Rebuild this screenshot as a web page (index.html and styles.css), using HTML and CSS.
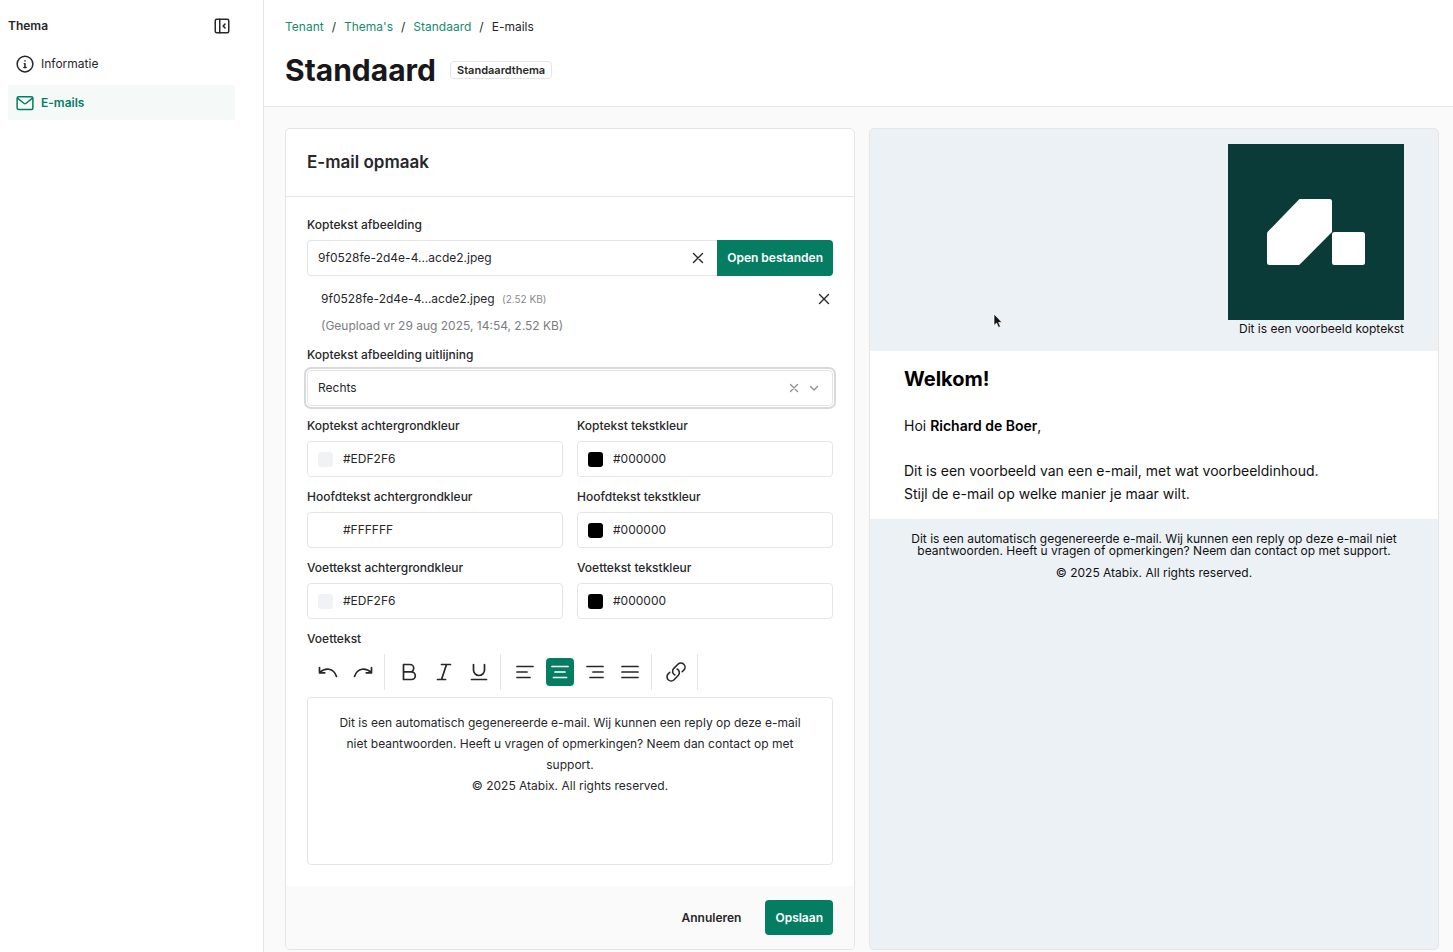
FILE: index.html
```html
<!DOCTYPE html>
<html lang="nl">
<head>
<meta charset="utf-8">
<meta name="viewport" content="width=device-width, initial-scale=1">
<title>Standaard – E-mails</title>
<link rel="stylesheet" href="styles.css">
</head>
<body>
<div class="app">
  <aside class="sidebar">
    <div class="sidebar-head">
      <h2 class="sidebar-title">Thema</h2>
      <button class="icon-button" type="button" aria-label="Zijbalk inklappen">
        <svg class="icon" width="18" height="18" viewBox="0 0 24 24"><rect x="3" y="3" width="18" height="18" rx="2"/><path d="M9 3v18M16 9.500l-2.500 2.500 2.500 2.500"/></svg>
      </button>
    </div>
    <nav class="nav">
      <a class="nav-link" href="#informatie">
        <svg class="icon" width="18" height="18" viewBox="0 0 24 24"><circle cx="12" cy="12" r="10.500"/><path d="M12 16.500v-5h-1M10.500 16.500h3M12 7.500v.5"/></svg>
        Informatie
      </a>
      <a class="nav-link nav-link-active" href="#e-mails" aria-current="page">
        <svg class="icon" width="18" height="18" viewBox="0 0 24 24"><rect x="1.500" y="3.500" width="21" height="17" rx="2"/><path d="M2 5.500l8.500 6.800a2.500 2.500 0 0 0 3 0L22 5.500"/></svg>
        E-mails
      </a>
    </nav>
  </aside>

  <main class="main">
    <header class="page-head">
      <nav class="breadcrumb" aria-label="Kruimelpad">
        <a href="#tenant">Tenant</a><span>/</span><a href="#themas">Thema's</a><span>/</span><a href="#standaard">Standaard</a><span>/</span><span>E-mails</span>
      </nav>
      <div class="title-row">
        <h1 class="page-title">Standaard</h1>
        <span class="badge">Standaardthema</span>
      </div>
    </header>

    <div class="content">
      <form class="card">
        <div class="card-head"><h2 class="card-title">E-mail opmaak</h2></div>
        <div class="card-body">
          <div class="field">
            <label class="label" for="header-image">Koptekst afbeelding</label>
            <div class="file-picker">
              <div class="control file-control">
                <input class="text-input" id="header-image" type="text" value="9f0528fe-2d4e-4...acde2.jpeg" readonly>
                <button class="icon-button" type="button" aria-label="Bestand wissen">
                  <svg class="icon" width="16" height="16" viewBox="0 0 16 16"><path d="M3.500 3.500l9 9M12.500 3.500l-9 9"/></svg>
                </button>
              </div>
              <button class="button button-primary file-open" type="button">Open bestanden</button>
            </div>
            <div class="file-list">
              <div class="file-row">
                <span>9f0528fe-2d4e-4...acde2.jpeg <small class="file-size">(2.52 KB)</small></span>
                <button class="icon-button" type="button" aria-label="Bestand verwijderen">
                  <svg class="icon" width="16" height="16" viewBox="0 0 16 16"><path d="M3.500 3.500l9 9M12.500 3.500l-9 9"/></svg>
                </button>
              </div>
              <p class="file-meta">(Geupload vr 29 aug 2025, 14:54, 2.52 KB)</p>
            </div>
          </div>

          <div class="field">
            <label class="label" for="header-align">Koptekst afbeelding uitlijning</label>
            <div class="control control-focus select-control">
              <select class="select" id="header-align">
                <option>Links</option><option>Midden</option><option selected>Rechts</option>
              </select>
              <button class="icon-button muted" type="button" aria-label="Keuze wissen">
                <svg class="icon" width="12" height="12" viewBox="0 0 12 12"><path d="M2.500 2.500l7 7M9.500 2.500l-7 7"/></svg>
              </button>
              <svg class="icon muted chevron" width="12" height="12" viewBox="0 0 12 12"><path d="M2.500 4.500L6 8l3.500-3.500"/></svg>
            </div>
          </div>

          <div class="color-grid">
            <div class="field">
              <label class="label" for="header-bg">Koptekst achtergrondkleur</label>
              <div class="control"><input class="swatch" type="color" value="#f1f2f4" aria-label="Kies koptekst achtergrondkleur"><input class="text-input" id="header-bg" type="text" value="#EDF2F6"></div>
            </div>
            <div class="field">
              <label class="label" for="header-fg">Koptekst tekstkleur</label>
              <div class="control"><input class="swatch" type="color" value="#000000" aria-label="Kies koptekst tekstkleur"><input class="text-input" id="header-fg" type="text" value="#000000"></div>
            </div>
            <div class="field">
              <label class="label" for="body-bg">Hoofdtekst achtergrondkleur</label>
              <div class="control"><input class="swatch" type="color" value="#ffffff" aria-label="Kies hoofdtekst achtergrondkleur"><input class="text-input" id="body-bg" type="text" value="#FFFFFF"></div>
            </div>
            <div class="field">
              <label class="label" for="body-fg">Hoofdtekst tekstkleur</label>
              <div class="control"><input class="swatch" type="color" value="#000000" aria-label="Kies hoofdtekst tekstkleur"><input class="text-input" id="body-fg" type="text" value="#000000"></div>
            </div>
            <div class="field">
              <label class="label" for="footer-bg">Voettekst achtergrondkleur</label>
              <div class="control"><input class="swatch" type="color" value="#f0f2f6" aria-label="Kies voettekst achtergrondkleur"><input class="text-input" id="footer-bg" type="text" value="#EDF2F6"></div>
            </div>
            <div class="field">
              <label class="label" for="footer-fg">Voettekst tekstkleur</label>
              <div class="control"><input class="swatch" type="color" value="#000000" aria-label="Kies voettekst tekstkleur"><input class="text-input" id="footer-fg" type="text" value="#000000"></div>
            </div>
          </div>

          <div class="field">
            <label class="label" for="footer-text">Voettekst</label>
            <div class="toolbar" role="toolbar" aria-label="Opmaak">
              <div class="tool-group">
                <button class="tool" type="button" aria-label="Ongedaan maken"><svg class="icon" width="20" height="20" viewBox="0 0 20 20"><path d="M1.500 5.500v5.300h5.300M1.800 10.500C7 5.500 15.500 5.500 18.500 14.500"/></svg></button>
                <button class="tool" type="button" aria-label="Opnieuw"><svg class="icon" width="20" height="20" viewBox="0 0 20 20"><path d="M18.500 5.500v5.300h-5.300M18.200 10.500C13 5.500 4.500 5.500 1.500 14.500"/></svg></button>
              </div>
              <div class="tool-group">
                <button class="tool" type="button" aria-label="Vet"><svg class="icon" width="20" height="20" viewBox="0 0 20 20"><path d="M4.500 2.500H11a3.700 3.700 0 0 1 0 7.400H4.500zM4.500 9.900h8a3.800 3.800 0 0 1 0 7.600h-8z"/></svg></button>
                <button class="tool" type="button" aria-label="Cursief"><svg class="icon" width="20" height="20" viewBox="0 0 20 20"><path d="M7.500 2.500h9M3.500 17.500h8M12.500 2.500l-5 15"/></svg></button>
                <button class="tool" type="button" aria-label="Onderstrepen"><svg class="icon" width="20" height="20" viewBox="0 0 20 20"><path d="M4.500 2.500v5.500a5.500 5.500 0 0 0 11 0V2.500M2.500 17.500h15"/></svg></button>
              </div>
              <div class="tool-group">
                <button class="tool" type="button" aria-label="Links uitlijnen"><svg class="icon" width="20" height="20" viewBox="0 0 20 20"><path d="M2 4.500h16M2 10h10M2 15.500h13"/></svg></button>
                <button class="tool tool-active" type="button" aria-label="Centreren" aria-pressed="true"><svg class="icon" width="20" height="20" viewBox="0 0 20 20"><path d="M2 4.500h16M5 10h10M3.500 15.500h13"/></svg></button>
                <button class="tool" type="button" aria-label="Rechts uitlijnen"><svg class="icon" width="20" height="20" viewBox="0 0 20 20"><path d="M2 4.500h16M8 10h10M5 15.500h13"/></svg></button>
                <button class="tool" type="button" aria-label="Uitvullen"><svg class="icon" width="20" height="20" viewBox="0 0 20 20"><path d="M2 4.500h16M2 10h16M2 15.500h16"/></svg></button>
              </div>
              <div class="tool-group">
                <button class="tool" type="button" aria-label="Link invoegen"><svg class="icon" width="22" height="22" viewBox="0 0 24 24"><path d="M13.200 8.700a4.500 4.500 0 0 1 1.200 7.200l-4.500 4.500a4.500 4.500 0 0 1-6.400-6.400l1.800-1.700m13.400-.6l1.800-1.700a4.500 4.500 0 0 0-6.400-6.400L9.600 8.100a4.500 4.500 0 0 0 1.200 7.200"/></svg></button>
              </div>
            </div>
            <textarea class="editor" id="footer-text">Dit is een automatisch gegenereerde e-mail. Wij kunnen een reply op deze e-mail niet beantwoorden. Heeft u vragen of opmerkingen? Neem dan contact op met support.
© 2025 Atabix. All rights reserved.</textarea>
          </div>
        </div>
        <div class="card-foot">
          <button class="button button-ghost" type="button">Annuleren</button>
          <button class="button button-primary" type="submit">Opslaan</button>
        </div>
      </form>

      <section class="preview" aria-label="Voorbeeld">
        <div class="mail-head">
          <svg class="logo" width="176" height="176" viewBox="0 0 176 176" role="img" aria-label="Atabix">
            <rect width="176" height="176" fill="#0a3b38"/>
            <path fill="#fff" d="M72 55h29.500a2.500 2.500 0 0 1 2.500 2.500V88L72 120.300a2 2 0 0 1-1.500.7H41.500a2.500 2.500 0 0 1-2.500-2.500V89.500a3 3 0 0 1 1-2L70.500 56a2.500 2.500 0 0 1 1.500-1z"/>
            <rect x="104" y="88" width="33" height="33" rx="2.500" fill="#fff"/>
          </svg>
          <p class="mail-caption">Dit is een voorbeeld koptekst</p>
          <svg class="pointer" width="12" height="16" viewBox="0 0 12 16" aria-hidden="true"><path d="M1 1v11.500l2.600-2.400 1.900 4.300 2-.9-1.900-4.100H9z" fill="#111" stroke="#fff" stroke-width=".7"/></svg>
        </div>
        <div class="mail-body">
          <h2 class="mail-title">Welkom!</h2>
          <p>Hoi <strong>Richard de Boer</strong>,</p>
          <p>Dit is een voorbeeld van een e-mail, met wat voorbeeldinhoud.<br>Stijl de e-mail op welke manier je maar wilt.</p>
        </div>
        <div class="mail-foot">
          <p>Dit is een automatisch gegenereerde e-mail. Wij kunnen een reply op deze e-mail niet beantwoorden. Heeft u vragen of opmerkingen? Neem dan contact op met support.</p>
          <p>© 2025 Atabix. All rights reserved.</p>
        </div>
      </section>
    </div>
  </main>
</div>
</body>
</html>
```
FILE: styles.css
```css
:root {
  --green: #047d62;
  --border: #e5e5e6;
  --text: #27272a;
}

* { box-sizing: border-box; }

body {
  margin: 0;
  font-family: Inter, "Liberation Sans", sans-serif;
  font-size: 12px;
  line-height: 18px;
  color: var(--text);
  background: #fff;
}

h1, h2, p { margin: 0; }
a { color: inherit; text-decoration: none; }
button, input, select, textarea { font: inherit; color: inherit; }
button { cursor: pointer; }

.icon {
  display: block;
  flex: none;
  fill: none;
  stroke: currentColor;
  stroke-width: 1.4;
  stroke-linecap: round;
  stroke-linejoin: round;
}

.icon-button {
  display: flex;
  padding: 0;
  border: 0;
  background: none;
}

.muted { color: #929294; }

.app { display: flex; min-height: 100vh; }

/* Sidebar */
.sidebar {
  flex: none;
  width: 264px;
  padding: 17px 28px 0 8px;
  border-right: 1px solid var(--border);
}
.sidebar-head {
  display: flex;
  align-items: center;
  justify-content: space-between;
  padding-right: 4px;
}
.sidebar-head .icon, .nav-link .icon { stroke-width: 2; }
.sidebar-title { font-size: 12px; font-weight: 600; }
.nav { display: flex; flex-direction: column; gap: 4px; margin-top: 11px; }
.nav-link {
  display: flex;
  align-items: center;
  gap: 7px;
  height: 35px;
  padding: 0 8px;
}
.nav-link-active { color: var(--green); background: #f5faf8; font-weight: 600; }

/* Page header */
.main { flex: 1; min-width: 0; background: #fafafa; }
.page-head {
  padding: 18px 21px;
  border-bottom: 1px solid var(--border);
  background: #fff;
}
.breadcrumb { display: flex; gap: 8px; }
.breadcrumb a { color: #168c6d; }
.title-row { display: flex; align-items: center; gap: 14px; margin-top: 16px; }
.page-title { font-size: 30px; line-height: 36px; font-weight: 700; color: #18181b; }
.badge {
  padding: 0 6px;
  border: 1px solid var(--border);
  border-radius: 4px;
  font-size: 11px;
  line-height: 16px;
  font-weight: 600;
}

/* Form card */
.content {
  display: grid;
  grid-template-columns: 1fr 1fr;
  gap: 14px;
  padding: 21px 14px 0 21px;
}
.card, .preview {
  border: 1px solid var(--border);
  border-radius: 5px;
  overflow: hidden;
}
.card { background: #fff; }
.card-head { padding: 21px; border-bottom: 1px solid var(--border); }
.card-title { font-size: 17px; line-height: 25px; font-weight: 600; }
.card-body {
  display: flex;
  flex-direction: column;
  gap: 11px;
  padding: 19px 21px 21px;
}
.label { display: block; margin-bottom: 6px; font-weight: 500; }
.control {
  display: flex;
  align-items: center;
  height: 36px;
  padding: 0 10px;
  border: 1px solid var(--border);
  border-radius: 4px;
  background: #fff;
}
.control-focus { outline: 2px solid #d9d9db; outline-offset: 1px; }
.text-input {
  flex: 1;
  min-width: 0;
  padding: 0;
  border: 0;
  outline: 0;
  background: none;
}
.file-picker { display: flex; }
.file-control { flex: 1; padding-right: 11px; border-right: 0; border-radius: 4px 0 0 4px; }
.file-list {
  display: flex;
  flex-direction: column;
  gap: 9px;
  padding: 14px 1px 0 14px;
}
.file-row { display: flex; align-items: center; justify-content: space-between; height: 18px; }
.file-size { margin-left: 4px; font-size: 10px; color: #8a8a8e; }
.file-meta { color: #7c7c80; }
.select-control { gap: 8px; padding-right: 12px; }
.select {
  flex: 1;
  align-self: stretch;
  padding: 0;
  border: 0;
  outline: 0;
  background: none;
  appearance: none;
}
.chevron { pointer-events: none; }

.color-grid { display: grid; grid-template-columns: 1fr 1fr; gap: 11px 14px; }
.swatch {
  width: 15px;
  height: 15px;
  margin-right: 10px;
  padding: 0;
  border: 0;
  border-radius: 3px;
  overflow: hidden;
  background: none;
  appearance: none;
}
.swatch::-webkit-color-swatch-wrapper { padding: 0; }
.swatch::-webkit-color-swatch { border: 0; }

.toolbar { display: flex; padding-bottom: 7px; }
.tool-group {
  display: flex;
  align-items: center;
  gap: 7px;
  height: 36px;
  padding: 0 7px 0 10px;
  border-right: 1px solid var(--border);
}
.tool-group:first-child { padding-left: 7px; }
.tool {
  display: grid;
  place-items: center;
  width: 28px;
  height: 28px;
  padding: 0;
  border: 0;
  border-radius: 4px;
  background: none;
}
.tool .icon { stroke-width: 1.7; }
.tool-active { color: #fff; background: var(--green); }
.editor {
  display: block;
  width: 100%;
  height: 168px;
  padding: 14px 21px;
  border: 1px solid var(--border);
  border-radius: 4px;
  outline: 0;
  resize: none;
  line-height: 21px;
  text-align: center;
}

.card-foot {
  display: flex;
  justify-content: flex-end;
  gap: 14px;
  padding: 14px 21px;
  background: #fafafa;
}
.button {
  height: 35px;
  padding: 0 10px;
  border: 0;
  border-radius: 4px;
  font-weight: 600;
}
.button-primary { color: #fff; background: var(--green); }
.button-ghost { background: none; }
.file-open { height: 36px; border-radius: 0 4px 4px 0; }

/* E-mail preview */
.preview { background: #ecf1f5; color: #111; }
.mail-head {
  position: relative;
  display: flex;
  flex-direction: column;
  align-items: flex-end;
  padding: 15px 34px 13px;
}
.logo { display: block; }
.pointer { position: absolute; left: 123px; top: 184px; }
.mail-body {
  display: flex;
  flex-direction: column;
  gap: 22px;
  padding: 16px 34px 14px;
  background: #fff;
  font-size: 14px;
  line-height: 23px;
}
.mail-title { font-size: 20px; line-height: 25px; font-weight: 700; color: #000; }
.mail-body strong { font-weight: 600; color: #000; }
.mail-foot {
  display: flex;
  flex-direction: column;
  gap: 10px;
  padding: 14px 34px;
  line-height: 12px;
  text-align: center;
}
```
